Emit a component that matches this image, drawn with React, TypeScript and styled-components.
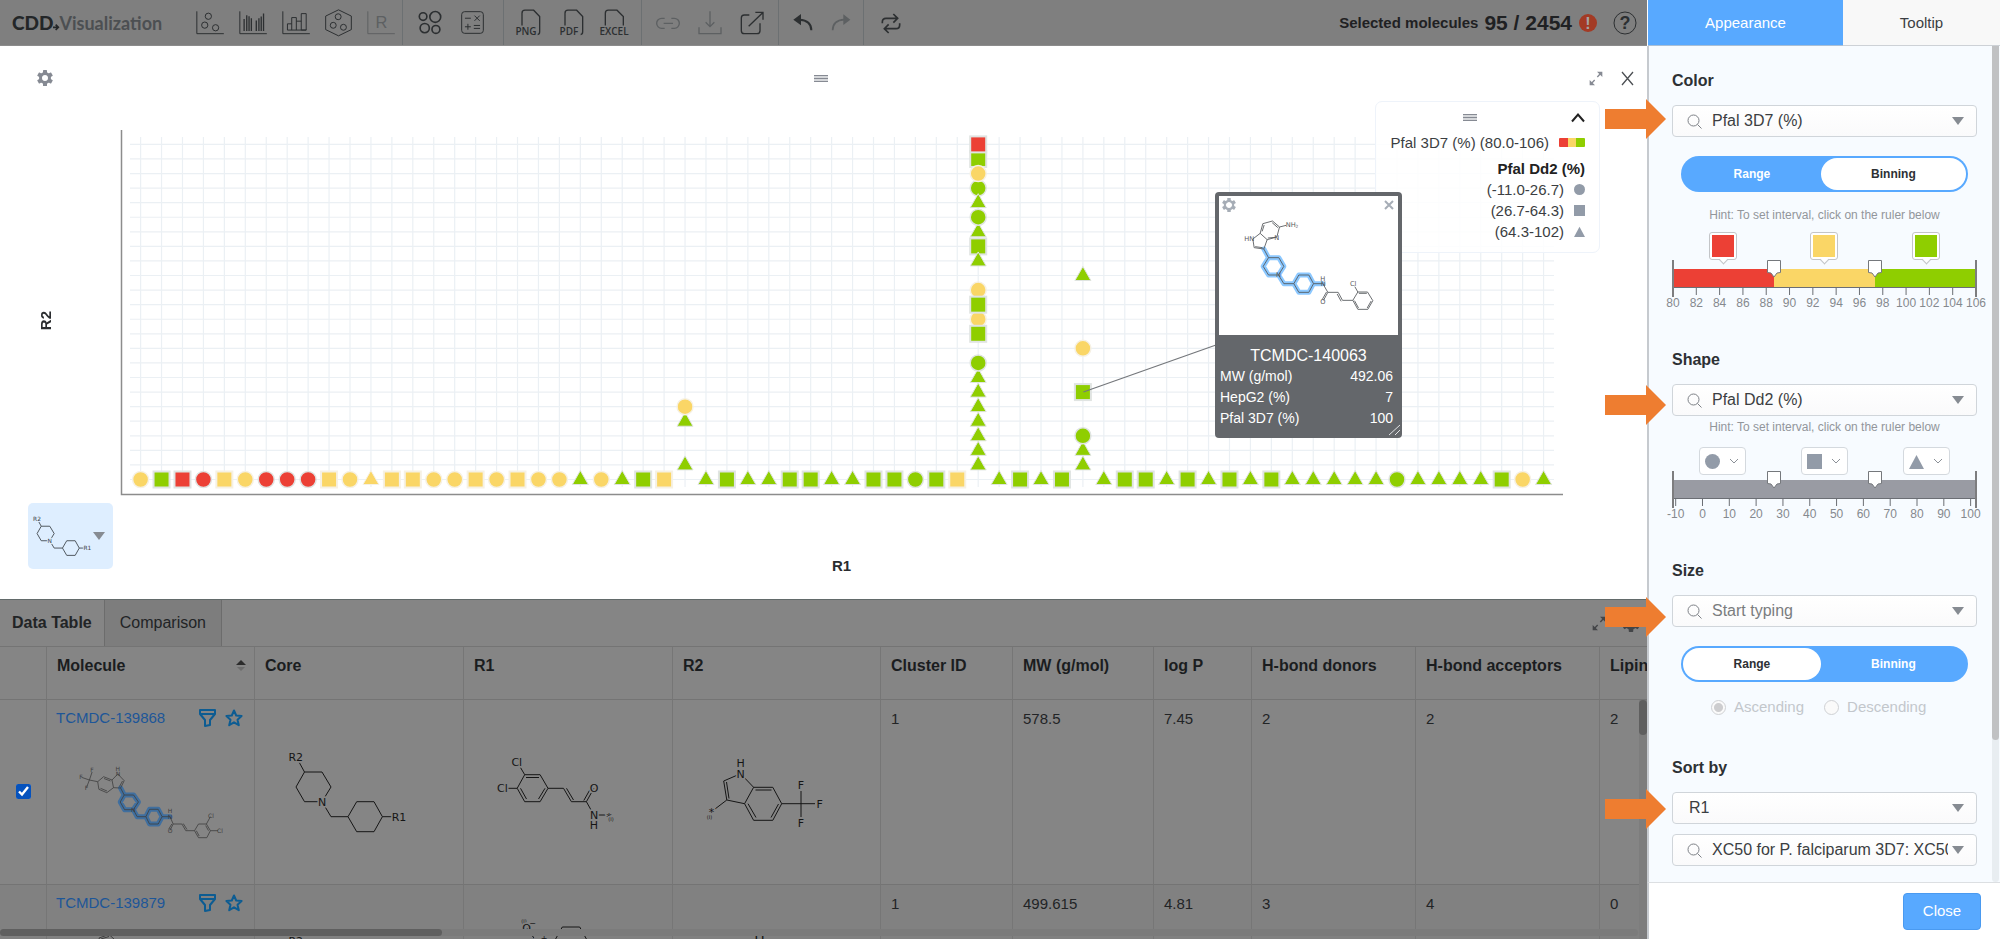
import React from "react";
import styled, { createGlobalStyle, css } from "styled-components";

const GlobalStyle = createGlobalStyle`
  * { box-sizing: border-box; }
  body {
    margin: 0;
    background: #fff;
    color: #3b3e42;
    font: 15px/20px "Liberation Sans", Arial, sans-serif;
  }
  button, input, select { font: inherit; color: inherit; }
`;

const RED = "#ec4035";
const YELLOW = "#fad666";
const GREEN = "#8fce00";
const BLUE = "#58a9ff";
const SLATE = "#929ba8";

/* ---------- page frame ---------- */

const Page = styled.div`
  display: flex;
  height: 100vh;
  overflow: hidden;
`;

const Main = styled.main`
  display: flex;
  flex: 1;
  flex-direction: column;
  min-width: 0;
`;

const PlainButton = styled.button`
  display: inline-flex;
  align-items: center;
  justify-content: center;
  padding: 0;
  border: 0;
  background: none;
`;

/* ---------- toolbar ---------- */

const Toolbar = styled.header`
  display: flex;
  flex: none;
  align-items: center;
  height: 46px;
  padding-right: 10px;
  border-bottom: 1px solid #8c8c8c;
  background: #7f7f7f;
  color: #2c2f31;
`;

const Brand = styled.div`
  display: flex;
  align-items: center;
  width: 196px;
  padding-left: 12px;
  font-family: Lato, sans-serif;
  font-size: 18px;
  font-weight: 700;
  color: #4c4f52;
  white-space: nowrap;
  & > svg { align-self: flex-end; color: #232628; }
`;

const BrandMark = styled.span`
  font-size: 19px;
  font-weight: 900;
  color: #232628;
`;

const ToolGroup = styled.div<{ $gap: number; $before: number; $after: number }>`
  display: flex;
  align-items: center;
  align-self: stretch;
  gap: ${(p) => p.$gap}px;
  padding: 0 ${(p) => p.$after}px 0 ${(p) => p.$before}px;
  & + & { border-left: 1px solid #6c7072; }
`;

const Tool = styled(PlainButton)`
  color: #2c2f31;
  &:disabled { color: #5d6062; }
`;

const Selection = styled.div`
  display: flex;
  align-items: center;
  gap: 6px;
  margin-left: auto;
  font-weight: 700;
  color: #1f2123;
  white-space: nowrap;
`;

const SelectionCount = styled.span`
  font-size: 21px;
`;

const Alert = styled.span`
  display: grid;
  place-items: center;
  width: 18px;
  height: 18px;
  margin: 0 10px 0 1px;
  border-radius: 50%;
  background: #a33b25;
  color: #a5a5a5;
  font-size: 16px;
`;

type DrawProps = { box: string; w: number; h: number; sw?: number; children: React.ReactNode };
const Draw = ({ box, w, h, sw = 3, children }: DrawProps) => (
  <svg viewBox={box} width={w} height={h} fill="none" stroke="currentColor" strokeWidth={sw} overflow="visible" aria-hidden>
    {children}
  </svg>
);

const FileIcon = ({ label, tail = true }: { label: string; tail?: boolean }) => (
  <Draw box="0 0 90 80" w={30} h={27} sw={4}>
    <path d={tail ? "M27 49V12Q27 3 36 3H62L80 22V68Q80 76 74 76" : "M19 49V12Q19 3 28 3H54L73 22V49"} />
    <text
      x={tail ? 39 : 45}
      y="77"
      textAnchor="middle"
      fontFamily="Open Sans, sans-serif"
      fontWeight="600"
      fontSize="30"
      fill="currentColor"
      stroke="none"
    >
      {label}
    </text>
  </Draw>
);

const Gear = ({ size = 16, hole = 3 }: { size?: number; hole?: number }) => (
  <svg viewBox="-8 -8 16 16" width={size} height={size} aria-hidden>
    {[0, 60, 120].map((a) => (
      <rect key={a} x="-2" y="-8" width="4" height="16" rx="0.6" fill="currentColor" transform={`rotate(${a})`} mask="url(#gearHole)" />
    ))}
    <circle r={(6 + hole) / 2} fill="none" stroke="currentColor" strokeWidth={6 - hole} />
  </svg>
);

const GearHole = styled.svg`
  position: absolute;
  width: 0;
  height: 0;
`;

const ExpandIcon = () => (
  <Draw box="0 0 42 45" w={14} h={15} sw={4}>
    <path d="M25 18L36 6M17 27L6 39" />
    <path d="M24 2H40V18Z M2 27V43H18Z" fill="currentColor" stroke="none" />
  </Draw>
);

const GripIcon = () => (
  <Draw box="0 0 14 7" w={14} h={7} sw={1}>
    <path d="M0 1H14V6H0Z" fill="#d5d7da" stroke="none" />
    <path d="M0 0.5H14M0 3.5H14M0 6.5H14" />
  </Draw>
);

const Caret = () => (
  <svg viewBox="0 0 12 8" width="12" height="8" aria-hidden>
    <path d="M0 0H12L6 8Z" fill="#868b92" />
  </svg>
);

/* ---------- molecules ---------- */

type Label = [number, number, string, number?];
type MoleculeProps = {
  box: string;
  w: number;
  h: number;
  bonds: string;
  highlight?: string;
  labels: Label[];
  size: number;
  sw?: number;
  halo?: string;
  ink?: string;
  glow?: string;
  glowWidth?: number;
};

const Molecule = ({
  box, w, h, bonds, highlight, labels, size, sw = 1, halo = "none", ink = "#151515", glow = "#8cc8ff", glowWidth = 4,
}: MoleculeProps) => (
  <svg viewBox={box} width={w} height={h} fill="none" stroke={ink} strokeWidth={sw} strokeLinejoin="round" aria-hidden>
    {highlight && <path d={highlight} stroke={glow} strokeWidth={glowWidth} strokeLinecap="round" />}
    <path d={bonds} />
    {highlight && <path d={highlight} />}
    {labels.map(([x, y, t, s = size], i) => (
      <text
        key={i}
        x={x}
        y={y + s * 0.37}
        fontSize={s}
        textAnchor="middle"
        fontFamily="DejaVu Sans, sans-serif"
        fill={ink}
        stroke={halo}
        strokeWidth={size * 0.3}
        paintOrder="stroke"
      >
        {t}
      </text>
    ))}
  </svg>
);

const CORE_BONDS =
  "M299 761L304.5 771H322L331 786L322 800.7H304.5L296 786L304.5 771M322 800.7L331 815.7H348L356.7 800.7H374L382.4 815.7L374 830.7H356.7L348 815.7M382.4 815.7H392";
const CORE_LABELS: Label[] = [[295.8, 756, "R2"], [322, 801, "N"], [399, 816, "R1"]];

const TOOLTIP_BONDS =
  "M240 162L248 133L277 125L298 143L290 173L261 181ZM246 156L252 137M276 130L293 145M286 174L263 176M240 162L218 179L222 205L251 209L261 181M225 202L247 205M298 143L318 138" +
  "M428 313L443 339L430 363M439 338L426 361M443 339H474L487 363H518M471 344L483 366M518 363L533 338H562L578 364L563 390H533ZM536 342H560M573 365L561 386M523 364L535 386M533 338L524 322";
const TOOLTIP_CORE =
  "M251 209L265 235H296L311 261L295 287H265L249 261L265 235M295 287L311 313H341L356 287H386L400 313L386 339H356L341 313M400 313H428";

const ROW_BONDS =
  "M92.1 772L89.4 780L81.5 777.3M89.4 780L86.6 787.3M89.4 780L97.7 781.7L103.6 776.7L112 780L113.5 787.7L106.8 792.7L98.9 789.3L97.7 781.7M104 778.5L110.5 781M107 791L100.5 788.3M112 780L117.8 774L124.2 780.7L120.6 788L113.5 787.7M122.5 781L119.5 786.5" +
  "M170 816.7L173.2 824L170 830.3M171.8 824L168.8 829M173.2 824H181.9L185.8 830.7H194.5L198.5 824H206.4L210.4 830.7L206.8 837.7H198.5L194.5 830.7M183.2 823.5L187 829.5M196.3 830.7L199.2 836M208.5 830.7L205.7 825.5M206.4 824L210.4 816.7M210.4 830.7H218";
const ROW_CORE =
  "M120.6 788L124.2 795H133.6L138.4 802L133.3 809.7H124.6L120.2 802L124.2 795M133.3 809.7L137.2 816.7H145.9L149.5 809.3H158.2L162.1 816.7L158.2 824H149.5L145.9 816.7M162.1 816.7H170";

/* ---------- plot ---------- */

const PlotPanel = styled.section`
  position: relative;
  flex: none;
  background: #fff;
`;

const PlotBar = styled.div`
  display: grid;
  grid-template-columns: 1fr auto 1fr;
  align-items: center;
  height: 64px;
  padding: 0 13px 0 7px;
  color: #868a93;
`;

const PlotSettings = styled(PlainButton)`
  justify-self: start;
  margin-left: 30px;
  color: inherit;
`;

const BarActions = styled.div`
  display: flex;
  align-items: center;
  justify-content: flex-end;
  gap: 18px;
  & > button { color: inherit; }
`;

const PlotBody = styled.div`
  display: grid;
  grid-template-columns: 120px 1fr;
`;

const YAxisName = styled.div`
  display: flex;
  align-items: center;
  padding: 28px 0 0 36px;
  font-weight: 700;
  color: #2a2c2f;
  & > span { writing-mode: vertical-rl; transform: rotate(180deg); }
`;

const PlotSvg = styled.svg`
  display: block;
  width: 100%;
`;

const PlotFoot = styled.div`
  display: grid;
  grid-template-columns: 120px 1fr;
  height: 96px;
  padding-bottom: 24px;
`;

const CorePicker = styled.button`
  display: flex;
  align-items: center;
  justify-content: space-between;
  width: 85px;
  height: 66px;
  margin-left: 28px;
  padding: 0 8px 0 3px;
  border: 0;
  border-radius: 5px;
  background: #deeeff;
`;

const XAxisName = styled.div`
  padding: 53px 84px 0 0;
  text-align: center;
  font-weight: 700;
  color: #2a2c2f;
`;

const COLS = Array.from({ length: 68 }, (_, i) => 140.6 + i * 20.94);
const ROWS = Array.from({ length: 24 }, (_, i) => 479.5 - i * 14.57);

const BOTTOM = (
  "cY sG sR cR sY cY cR cR cR sY cY tY sY sY cY cY sY cY sY cY cY tG cY tG sG sY -- tG sG tG tG sG sG tG " +
  "tG sG sG cG sG sY -- tG sG tG sG -- tG sG sG tG sG tG sG tG sG tG tG tG tG tG cG tG tG tG tG sG cY tG"
).split(" ");

const STACKED: [number, number, string][] = [
  [26, 1, "tG"], [26, 4, "tG"], [26, 5, "cY"],
  [40, 7, "tG"], [40, 6, "tG"], [40, 5, "tG"], [40, 4, "tG"], [40, 3, "tG"], [40, 2, "tG"], [40, 1, "tG"], [40, 8, "cG"],
  [40, 11, "cY"], [40, 13, "cY"], [40, 10, "sG"], [40, 12, "sG"],
  [40, 17, "tG"], [40, 16, "sG"], [40, 15, "tG"], [40, 18, "cG"], [40, 20, "cG"], [40, 19, "tG"],
  [40, 22, "sG"], [40, 21, "cY"], [40, 23, "sR"],
  [45, 1, "tG"], [45, 2, "tG"], [45, 3, "cG"], [45, 6, "sG"], [45, 9, "cY"], [45, 14, "tG"],
];

const FILLS: Record<string, string> = { R: RED, Y: YELLOW, G: GREEN };

const Mark = ({ x, y, kind }: { x: number; y: number; kind: string }) => {
  const fill = FILLS[kind[1]];
  const edge = kind[1] === "Y" ? "#f6f1e4" : "#e0e4e2";
  if (kind[0] === "c") return <circle cx={x} cy={y} r="8" fill={fill} stroke={edge} strokeWidth="1.5" />;
  if (kind[0] === "s") return <rect x={x - 8} y={y - 8} width="16" height="16" fill={fill} stroke={edge} strokeWidth="2" />;
  if (kind[0] === "t") return <path d={`M${x} ${y - 9}L${x + 8} ${y + 5}H${x - 8}Z`} fill={fill} stroke={edge} strokeWidth="1" />;
  return null;
};

const Plot = () => (
  <PlotSvg viewBox="120 110 1527 393" role="img" aria-label="R1 by R2 scatter plot">
    <path
      d={COLS.map((x) => `M${x} 137V487`).join("") + ROWS.map((y) => `M130 ${y}H1554`).join("")}
      stroke="#ebf0f4"
      strokeWidth="1.2"
    />
    <path d="M121.5 130V494.5H1563" fill="none" stroke="#8c8c8c" strokeWidth="1.5" />
    {BOTTOM.map((kind, i) => <Mark key={i} x={COLS[i]} y={ROWS[0]} kind={kind} />)}
    {STACKED.map(([c, r, kind]) => <Mark key={`${c}-${r}`} x={COLS[c]} y={ROWS[r]} kind={kind} />)}
    <path d="M1083.4 392L1216 345" stroke="#74777b" strokeWidth="1.2" />
  </PlotSvg>
);

const Legend = styled.div`
  position: absolute;
  top: 55px;
  right: 47px;
  display: flex;
  flex-direction: column;
  width: 225px;
  height: 152px;
  padding: 7px 14px 0;
  border: 1px solid #eef3fa;
  border-radius: 7px;
  background: rgba(255, 255, 255, 0.85);
  line-height: 21px;
`;

const LegendTop = styled.div`
  display: grid;
  grid-template-columns: 1fr 14px 108px;
  align-items: center;
  height: 16px;
  margin-bottom: 7px;
  color: #868a93;
  & > svg { grid-column: 2; }
  & > button { justify-self: end; color: #222; }
`;

const LegendRow = styled.div`
  display: flex;
  align-items: center;
  justify-content: flex-end;
  gap: 10px;
  white-space: nowrap;
`;

const LegendTitle = styled.div`
  margin-top: 5px;
  text-align: right;
  font-weight: 700;
  color: #222;
`;

const Ramp = styled.span`
  width: 26px;
  height: 9px;
  border-radius: 1px;
  background: linear-gradient(90deg, ${RED} 33%, ${YELLOW} 33% 66%, ${GREEN} 66%);
`;

const ShapeIcon = ({ kind, size }: { kind: string; size: number }) => (
  <svg viewBox="0 0 16 16" width={size} height={size} fill={SLATE} aria-hidden>
    {kind === "circle" && <circle cx="8" cy="8" r="8" />}
    {kind === "square" && <path d="M0 0H16V16H0Z" />}
    {kind === "triangle" && <path d="M8 1L16 16H0Z" />}
  </svg>
);

const Card = styled.article`
  position: absolute;
  top: 146px;
  left: 1215px;
  width: 187px;
  height: 246px;
  padding: 4px;
  border-radius: 4px;
  background: #64676b;
  color: #fff;
  font-size: 14px;
  line-height: 21px;
`;

const CardPicture = styled.div`
  position: relative;
  height: 139px;
  background: #fff;
  & > svg { display: block; }
`;

const CardTools = styled.div`
  position: absolute;
  inset: 2px 4px auto 3px;
  display: flex;
  justify-content: space-between;
  & > button { color: #a6adb6; }
`;

const CardTitle = styled.h3`
  margin: 10px 0 0;
  font-size: 16px;
  font-weight: 400;
  text-align: center;
`;

const CardList = styled.dl`
  display: grid;
  grid-template-columns: 1fr auto;
  margin: 0;
  padding: 0 5px 0 1px;
  & > dd { margin: 0; text-align: right; }
`;

const CardResize = styled.span`
  position: absolute;
  right: 1px;
  bottom: 2px;
  line-height: 0;
`;

/* ---------- data table ---------- */

const Data = styled.section`
  position: relative;
  display: flex;
  flex: 1;
  flex-direction: column;
  min-height: 0;
  overflow: hidden;
  border-top: 1px solid #626a6a;
  background: #858585;
  color: #222426;
`;

const DataBar = styled.div`
  display: flex;
  flex: none;
  align-items: stretch;
  height: 47px;
  border-bottom: 1px solid #747474;
  font-size: 16px;
`;

const DataTab = styled.button<{ $active?: boolean }>`
  padding: 0 ${(p) => (p.$active ? 12 : 15)}px;
  border: 0;
  border-right: 1px solid #6c6c6c;
  background: ${(p) => (p.$active ? "none" : "#7d7d7d")};
  font-weight: ${(p) => (p.$active ? 700 : 400)};
`;

const DataActions = styled.div`
  display: flex;
  align-items: center;
  gap: 16px;
  margin-left: auto;
  padding-right: 7px;
  color: #434548;
  & > button { color: inherit; }
`;

const Table = styled.table`
  table-layout: fixed;
  width: 1800px;
  border-collapse: separate;
  border-spacing: 0;
`;

const Th = styled.th`
  height: 53px;
  padding: 9px 8px 0 10px;
  border-right: 1px solid #767676;
  border-bottom: 1px solid #747474;
  font-size: 16px;
  text-align: left;
  vertical-align: top;
  color: #1b1d1f;
  white-space: nowrap;
`;

const ThSort = styled.span`
  display: flex;
  align-items: center;
  justify-content: space-between;
`;

const Tr = styled.tr<{ $alt?: boolean }>`
  background: ${(p) => (p.$alt ? "#818181" : "#858585")};
`;

const Td = styled.td<{ $kind?: "tick" | "drawing" }>`
  height: 185px;
  padding: 9px 10px 0;
  border-right: 1px solid #767676;
  border-bottom: 1px solid #747474;
  vertical-align: top;
  ${(p) => p.$kind === "tick" && css`padding: 4px 0 0; vertical-align: middle; text-align: center;`}
  ${(p) => p.$kind === "drawing" && css`padding: 0;`}
  & > svg { display: block; }
`;

const Tick = styled.input`
  width: 15px;
  height: 15px;
  margin: 0;
  accent-color: #0552bd;
`;

const NameLine = styled.div`
  display: flex;
  align-items: center;
  gap: 9px;
  height: 36px;
  padding: 0 11px 0 9px;
  & > a { margin-right: auto; color: #1d5698; text-decoration: none; }
  & > button { color: #0d5c92; }
`;

const HScroll = styled.div`
  position: absolute;
  right: 9px;
  bottom: 3px;
  left: 0;
  height: 7px;
  border-radius: 4px;
  background: #7b7b7b;
`;

const HThumb = styled.div`
  width: 27%;
  height: 7px;
  border-radius: 4px;
  background: #5f5f5f;
`;

const VScroll = styled.div`
  position: absolute;
  top: 100px;
  right: 0;
  bottom: 0;
  width: 8px;
  background: #7d7d7d;
`;

const VThumb = styled.div`
  height: 35px;
  border-radius: 4px;
  background: #5f5f5f;
`;

const Funnel = () => (
  <Draw box="0 0 17 18" w={17} h={18} sw={2}>
    <path d="M1 1H16V5L11 11V16L6 17V11L1 5ZM1 5H16" strokeLinejoin="round" />
  </Draw>
);
const Star = () => (
  <Draw box="0 0 18 18" w={18} h={18} sw={2}>
    <path d="M9 1.5L11.2 6.5L16.6 7L12.5 10.7L13.8 16.2L9 13.3L4.2 16.2L5.5 10.7L1.4 7L6.8 6.5Z" strokeLinejoin="round" />
  </Draw>
);

const NameCell = ({ name, children }: { name: string; children: React.ReactNode }) => (
  <Td $kind="drawing">
    <NameLine>
      <a href="#molecule">{name}</a>
      <PlainButton aria-label="Filter"><Funnel /></PlainButton>
      <PlainButton aria-label="Favorite"><Star /></PlainButton>
    </NameLine>
    {children}
  </Td>
);

const COLUMN_WIDTHS = [47, 208, 209, 209, 208, 132, 141, 98, 164, 184, 200];
const NUMERIC_HEADS = ["Cluster ID", "MW (g/mol)", "log P", "H-bond donors", "H-bond acceptors", "Lipinski"];

const cell = { size: 11, halo: "#858585" };

const DataTable = () => (
  <Table>
    <colgroup>
      {COLUMN_WIDTHS.map((w, i) => <col key={i} width={w} />)}
    </colgroup>
    <thead>
      <tr>
        <Th aria-label="Selected" />
        <Th>
          <ThSort>
            Molecule
            <svg viewBox="0 0 10 12" width="10" height="12" aria-hidden>
              <path d="M0 5L5 0L10 5Z" fill="#2c2c2c" />
              <path d="M1 7H9L5 11Z" fill="#6d6d6d" />
            </svg>
          </ThSort>
        </Th>
        <Th>Core</Th>
        <Th>R1</Th>
        <Th>R2</Th>
        {NUMERIC_HEADS.map((h) => <Th key={h}>{h}</Th>)}
      </tr>
    </thead>
    <tbody>
      <Tr>
        <Td $kind="tick"><Tick type="checkbox" defaultChecked aria-label="Select TCMDC-139868" /></Td>
        <NameCell name="TCMDC-139868">
          <Molecule
            box="47 736 207 130" w={207} h={130} size={6} bonds={ROW_BONDS} highlight={ROW_CORE}
            ink="#3d3d3d" glow="#406f9f" sw={0.8} glowWidth={5}
            labels={[[92.1, 770, "F"], [81, 777, "F"], [86.6, 788, "F"], [117.8, 769, "H"], [118, 774, "N"], [133.3, 809.7, "N"],
              [170, 811, "H"], [170, 817, "N"], [170, 831, "O"], [211, 816, "Cl"], [220, 831, "Cl"]]}
          />
        </NameCell>
        <Td $kind="drawing"><Molecule box="255 699 208 184" w={208} h={184} bonds={CORE_BONDS} labels={CORE_LABELS} {...cell} /></Td>
        <Td $kind="drawing">
          <Molecule
            box="464 699 208 184" w={208} h={184} {...cell}
            bonds="M519 764L524.7 773.7H540.1L548 787.3L540.1 800.7H524.7L517.2 787.3L524.7 773.7M526 776.5H539M545 787.3L538.5 798M526.5 798L520.5 787.3M517.2 787.3H508M548 787.3H563.5L571.4 800.7H586.4L593.9 787.3M566.5 787.3L573.5 799M583.8 799.5L590 788.5M586.4 800.7L593.9 814H607"
            labels={[[516.8, 760.7, "Cl"], [502.4, 787.3, "Cl"], [594, 787, "O"], [594, 814, "N"], [594, 824, "H"], [609, 816, "*"], [611, 818, "(I)", 5]]}
          />
        </Td>
        <Td $kind="drawing">
          <Molecule
            box="673 699 207 184" w={207} h={184} {...cell}
            bonds="M740.6 772.7L723.7 780L726.8 799L744.6 802.7L753.6 786.3L740.6 772.7M726.5 781L729 797.5M753.6 786.3H772.8L781.7 802.7L772.8 819.3H753.6L744.6 802.7M755.5 789H771.5M778.5 803L771 816.5M756 816.5L748 802.7M781.7 802.7H815M801 790V816M726.8 799L715 808"
            labels={[[740.6, 762, "H"], [740.6, 772.7, "N"], [801, 784, "F"], [819.6, 802.7, "F"], [801, 822, "F"], [711.6, 811, "*"], [709.4, 816, "(I)", 5]]}
          />
        </Td>
        {["1", "578.5", "7.45", "2", "2", "2"].map((v, i) => <Td key={i}>{v}</Td>)}
      </Tr>
      <Tr $alt>
        <Td $kind="tick" />
        <NameCell name="TCMDC-139879">
          <Molecule box="47 921 207 140" w={207} h={140} size={6} ink="#3d3d3d" bonds="M99 938L109 934.5L114 939L112 948H102ZM101 939L109 936.5" labels={[]} />
        </NameCell>
        <Td $kind="drawing"><Molecule box="255 884 208 184" w={208} h={184} size={11} bonds="" labels={[[295.8, 940, "R2"]]} /></Td>
        <Td $kind="drawing">
          <Molecule
            box="464 884 208 184" w={208} h={184} size={11} halo="#818181"
            bonds="M527 927L538 943M555.6 938L562.3 926H579.7L586.4 938M564 929H578"
            labels={[[524, 920, "(I)", 5], [526.5, 927, "O"], [532.5, 922, "−", 8], [538, 942, "N"], [544, 937, "+", 8]]}
          />
        </Td>
        <Td $kind="drawing"><Molecule box="673 884 207 184" w={207} h={184} size={14} bonds="" labels={[[759.4, 934, "H"]]} /></Td>
        {["1", "499.615", "4.81", "3", "4", "0"].map((v, i) => <Td key={i}>{v}</Td>)}
      </Tr>
    </tbody>
  </Table>
);

/* ---------- settings panel ---------- */

const Panel = styled.aside`
  position: relative;
  display: flex;
  flex: none;
  flex-direction: column;
  width: 353px;
`;

const PanelTabs = styled.div`
  display: flex;
  flex: none;
  height: 46px;
  padding-left: 1px;
`;

const PanelTab = styled.button<{ $active?: boolean }>`
  flex: ${(p) => (p.$active ? 195 : 157)};
  padding: 0;
  border: 0;
  border-bottom: 1px solid ${(p) => (p.$active ? "#a9bfd6" : "#cdd1d6")};
  background: ${(p) => (p.$active ? BLUE : "#f8f8f8")};
  color: ${(p) => (p.$active ? "#fff" : "#3b3e42")};
`;

const PanelBody = styled.div`
  display: flex;
  flex: 1;
  min-height: 0;
  overflow: hidden;
  border-left: 2px solid #c6cacf;
  background: #f7fbff;
`;

const PanelContent = styled.form`
  flex: 1;
  min-width: 0;
  padding: 25px 15px 16px 23px;
`;

const PanelScroll = styled.div`
  width: 7px;
  margin-right: 1px;
  border-radius: 4px;
  background: #e8edf1;
`;

const PanelThumb = styled.div`
  height: 83%;
  border-radius: 0 0 4px 4px;
  background: #c0c1c3;
`;

const Group = styled.fieldset`
  min-width: 0;
  margin: 0 0 41px;
  padding: 0;
  border: 0;
`;

const GroupTitle = styled.legend`
  margin-bottom: 14px;
  padding: 0;
  font-size: 16px;
  font-weight: 700;
  color: #2d3034;
`;

const Field = styled.label<{ $plain?: boolean }>`
  display: flex;
  align-items: center;
  height: 32px;
  padding: 0 12px 0 ${(p) => (p.$plain ? 16 : 14)}px;
  border: 1px solid #d0d5da;
  border-radius: 4px;
  background: linear-gradient(#fff, #fafafb);
  font-size: 16px;
  & + & { margin-top: 10px; }
  & > svg { flex: none; }
  & > select, & > input {
    flex: 1;
    min-width: 0;
    margin: 0 4px 0 0;
    padding: 0;
    padding-left: ${(p) => (p.$plain ? 0 : 10)}px;
    border: 0;
    outline: 0;
    appearance: none;
    background: none;
  }
  & > input::placeholder { color: #7a7c7f; }
`;

const SearchIcon = () => (
  <Draw box="0 0 15 15" w={15} h={15} sw={1}>
    <g stroke="#7d8187"><circle cx="6.5" cy="6.5" r="5.5" /><path d="M10.5 10.5L14.5 14.5" /></g>
  </Draw>
);

const SelectField = ({ label, value, plain }: { label: string; value: string; plain?: boolean }) => (
  <Field $plain={plain}>
    {!plain && <SearchIcon />}
    <select aria-label={label} defaultValue={value}><option>{value}</option></select>
    <Caret />
  </Field>
);

const Switch = styled.div`
  display: flex;
  height: 36px;
  margin: 19px 9px 15px;
  padding: 2px;
  border-radius: 18px;
  background: ${BLUE};
`;

const SwitchOption = styled.button<{ $on?: boolean }>`
  flex: 20;
  padding: 0;
  border: 0;
  border-radius: 16px;
  background: ${(p) => (p.$on ? "#fff" : "none")};
  color: ${(p) => (p.$on ? "#2d3034" : "#fff")};
  font-size: 12px;
  font-weight: 700;
  &:first-child { flex: 19; }
`;

const RangeSwitch = ({ binning }: { binning?: boolean }) => (
  <Switch>
    <SwitchOption type="button" $on={!binning} aria-pressed={!binning}>Range</SwitchOption>
    <SwitchOption type="button" $on={binning} aria-pressed={!!binning}>Binning</SwitchOption>
  </Switch>
);

const Hint = styled.p`
  margin: 3px 0 0;
  font-size: 12px;
  line-height: 16px;
  text-align: center;
  color: #92969b;
  white-space: nowrap;
`;

const BinRow = styled.div<{ $before: number; $after: number }>`
  display: grid;
  grid-template-columns: repeat(3, 1fr);
  justify-items: center;
  margin: ${(p) => p.$before}px 0 ${(p) => p.$after}px;
`;

const Swatch = styled.button<{ $color: string }>`
  position: relative;
  width: 28px;
  height: 28px;
  padding: 2px;
  border: 1px solid #c3c5c8;
  border-radius: 3px;
  background: #fff;
  &::before {
    content: "";
    display: block;
    height: 22px;
    background: ${(p) => p.$color};
  }
  &::after {
    content: "";
    position: absolute;
    bottom: -4px;
    left: 10px;
    width: 6px;
    height: 6px;
    border: solid #c3c5c8;
    border-width: 0 1px 1px 0;
    background: linear-gradient(135deg, transparent 50%, #fff 50%);
    transform: rotate(45deg);
  }
`;

const ShapePick = styled.button`
  display: flex;
  align-items: center;
  gap: 10px;
  width: 47px;
  height: 28px;
  padding: 0 7px 0 5px;
  border: 1px solid #d4d9de;
  border-radius: 4px;
  background: #fff;
`;

const RulerSvg = styled.svg`
  display: block;
  width: 100%;
  overflow: visible;
`;

type RulerProps = { min: number; max: number; from: number; step: number; colors: string[] };
const Ruler = ({ min, max, from, step, colors }: RulerProps) => {
  const at = (v: number) => 1 + ((v - min) / (max - min)) * 303;
  const ticks: number[] = [];
  for (let v = from; v <= max; v += step) ticks.push(v);
  return (
    <RulerSvg viewBox="0 0 305 40" aria-hidden>
      {colors.map((c, i) => <rect key={i} x={1 + i * 101} y="0" width="101" height="18" fill={c} />)}
      <path d="M0 18.5H305" stroke="#6b6e74" />
      <path d={ticks.map((v) => `M${at(v)} 18V26`).join("")} stroke="#6b6e74" />
      <path d="M1 -9V28M304 -9V28" stroke="#7d7d7f" strokeWidth="2" />
      {[102, 203].map((x) => (
        <path key={x} d={`M${x - 6.5} -8.5H${x + 6.5}V3.5L${x + 3} 4L${x} 8L${x - 3} 4L${x - 6.5} 3.5Z`} fill="#fff" stroke="#75787c" strokeLinejoin="round" />
      ))}
      {ticks.map((v) => (
        <text key={v} x={at(v)} y="38" textAnchor="middle" fontSize="12" fill="#85898e">{v}</text>
      ))}
    </RulerSvg>
  );
};

const Radios = styled.div`
  display: flex;
  align-items: center;
  gap: 20px;
  padding-left: 39px;
  color: #c3c7cc;
  & > label { display: flex; align-items: center; gap: 8px; }
`;

const Radio = styled.input`
  appearance: none;
  width: 15px;
  height: 15px;
  margin: 0;
  border: 1px solid #cfd1d4;
  border-radius: 50%;
  background: #fafafa;
  &:checked { background: radial-gradient(#cdcdcf 4px, #fafafa 5px); }
`;

const PanelFoot = styled.footer`
  display: flex;
  flex: none;
  align-items: center;
  justify-content: flex-end;
  height: 57px;
  padding-right: 19px;
  border-top: 1px solid #dcdfe2;
  border-left: 2px solid #c6cacf;
  background: #fff;
`;

const CloseButton = styled.button`
  width: 78px;
  height: 37px;
  border: 1px solid #4a9af0;
  border-radius: 4px;
  background: ${BLUE};
  color: #fff;
`;

const Callout = styled.svg<{ $top: number }>`
  position: absolute;
  top: ${(p) => p.$top}px;
  left: -42px;
  width: 61px;
  height: 40px;
  fill: #ee7d30;
`;

const CALLOUT_TOPS = [99, 385, 597, 789];

export default function App() {
  return (
    <Page>
      <GlobalStyle />
      <GearHole aria-hidden>
        <mask id="gearHole" maskUnits="userSpaceOnUse" x="-9" y="-9" width="18" height="18">
          <rect x="-9" y="-9" width="18" height="18" fill="#fff" />
          <circle r="3.4" fill="#000" />
        </mask>
      </GearHole>
      <Main>
        <Toolbar>
          <Brand>
            <BrandMark>CDD</BrandMark>
            <Draw box="0 0 18 30" w={6} h={10} sw={5}><path d="M0 13H14M8 5L16 13L8 21" /></Draw>
            Visualization
          </Brand>
          <ToolGroup $gap={15} $before={0} $after={7}>
            <Tool aria-label="Scatter plot">
              <Draw box="590 28 84 76" w={28} h={25}>
                <path d="M592 32V100H674" /><circle cx="627" cy="47" r="9.5" /><circle cx="616" cy="74" r="9.5" /><circle cx="649" cy="82" r="9.5" />
              </Draw>
            </Tool>
            <Tool aria-label="Histogram">
              <Draw box="716 28 84 76" w={28} h={25} sw={4}>
                <path d="M718 32V100H800" strokeWidth="3" /><path d="M731 55V92M739 44V92M746 47V92M753 53V92M768 60V92M776 53V92M783 48V92M790 39V92" />
              </Draw>
            </Tool>
            <Tool aria-label="Bar chart">
              <Draw box="846 28 84 76" w={28} h={25}>
                <path d="M848 32V100H930M862 89V70H875M875 89V51H889V89M889 62H904M904 89V39H919V89Z" /><path d="M862 89H919" />
              </Draw>
            </Tool>
            <Tool aria-label="Radial plot">
              <Draw box="975 26 82 84" w={27} h={28}>
                <path d="M1016 28L1055 47V88L1016 107L977 88V47Z" /><circle cx="1015" cy="49" r="9" /><circle cx="1000" cy="75" r="9" /><circle cx="1031" cy="81" r="9" />
              </Draw>
            </Tool>
            <Tool aria-label="R-group plot" disabled>
              <Draw box="1100 28 84 76" w={28} h={25}>
                <path d="M1102 32V100H1184" />
                <text x="1143" y="83" textAnchor="middle" fontSize="50" fill="currentColor" stroke="none">R</text>
              </Draw>
            </Tool>
          </ToolGroup>
          <ToolGroup $gap={19} $before={15} $after={19}>
            <Tool aria-label="Clusters">
              <Draw box="1252 30 72 76" w={24} h={25} sw={5}>
                <circle cx="1267" cy="50" r="11.5" /><circle cx="1304" cy="51" r="16.5" /><circle cx="1272" cy="85" r="14" /><circle cx="1306" cy="89" r="12" />
              </Draw>
            </Tool>
            <Tool aria-label="Calculator">
              <Draw box="1382 32 70 70" w={23} h={23}>
                <rect x="1384" y="34" width="66" height="66" rx="9" /><path d="M1394 54H1412M1423 46L1439 62M1439 46L1423 62M1394 80H1412M1403 71V89M1421 76H1440M1421 85H1440" />
              </Draw>
            </Tool>
          </ToolGroup>
          <ToolGroup $gap={13} $before={9} $after={12}>
            <Tool aria-label="Export PNG"><FileIcon label="PNG" /></Tool>
            <Tool aria-label="Export PDF"><FileIcon label="PDF" /></Tool>
            <Tool aria-label="Export Excel"><FileIcon label="EXCEL" tail={false} /></Tool>
          </ToolGroup>
          <ToolGroup $gap={18} $before={14} $after={14}>
            <Tool aria-label="Copy link" disabled>
              <Draw box="527 30 72 72" w={24} h={24} sw={4}><path d="M553 52H544a15 15 0 0 0 0 30H553M573 52H582a15 15 0 0 1 0 30H573M550 67H578" /></Draw>
            </Tool>
            <Tool aria-label="Download" disabled>
              <Draw box="650 29 72 72" w={24} h={24} sw={4}><path d="M653 78V97H719V78M686 30V75M673 63L686 76L699 63" /></Draw>
            </Tool>
            <Tool aria-label="Open">
              <Draw box="780 32 72 72" w={24} h={24} sw={4}><path d="M808 44H793Q784 44 784 53V91Q784 100 793 100H831Q840 100 840 91V69M806 78L848 37M826 36H849V58" /></Draw>
            </Tool>
          </ToolGroup>
          <ToolGroup $gap={18} $before={14} $after={12}>
            <Tool aria-label="Undo">
              <Draw box="937 36 60 60" w={20} h={20} sw={6}><path d="M956 56Q992 58 992 88" /><path d="M938 56L961 39V73Z" fill="currentColor" stroke="none" /></Draw>
            </Tool>
            <Tool aria-label="Redo" disabled>
              <Draw box="1048 36 60 60" w={20} h={20} sw={5}><path d="M1088 56Q1053 58 1053 88" /><path d="M1106 56L1085 40V72Z" fill="currentColor" stroke="none" /></Draw>
            </Tool>
          </ToolGroup>
          <ToolGroup $gap={0} $before={17} $after={0}>
            <Tool aria-label="Reset">
              <Draw box="1202 37 60 60" w={20} h={20} sw={5}><path d="M1206 68V64Q1206 53 1217 53H1250M1239 40L1252 53L1239 66M1258 68V73Q1258 84 1247 84H1214M1225 71L1212 84L1225 97" /></Draw>
            </Tool>
          </ToolGroup>
          <Selection>
            Selected molecules <SelectionCount>95 / 2454</SelectionCount>
            <Alert>!</Alert>
            <Tool aria-label="Help">
              <Draw box="0 0 24 24" w={24} h={24} sw={1}>
                <circle cx="12" cy="12" r="11" />
                <text x="12" y="18" textAnchor="middle" fontSize="18" fill="currentColor" stroke="none">?</text>
              </Draw>
            </Tool>
          </Selection>
        </Toolbar>

        <PlotPanel>
          <PlotBar>
            <PlotSettings aria-label="Plot settings"><Gear /></PlotSettings>
            <GripIcon />
            <BarActions>
              <PlainButton aria-label="Expand plot"><ExpandIcon /></PlainButton>
              <PlainButton aria-label="Close plot">
                <Draw box="0 0 13 13" w={13} h={13} sw={1}><path d="M1 0L12 13M12 0L1 13" stroke="#4d5054" strokeWidth="1.3" /></Draw>
              </PlainButton>
            </BarActions>
          </PlotBar>
          <PlotBody>
            <YAxisName><span>R2</span></YAxisName>
            <Plot />
          </PlotBody>
          <PlotFoot>
            <CorePicker aria-label="Core">
              <Molecule box="284 748 124 86" w={61} h={42} bonds={CORE_BONDS} labels={CORE_LABELS} size={12} sw={1.8} ink="#3f454b" halo="#deeeff" />
              <Caret />
            </CorePicker>
            <XAxisName>R1</XAxisName>
          </PlotFoot>

          <Legend>
            <LegendTop>
              <GripIcon />
              <PlainButton aria-label="Collapse legend">
                <Draw box="0 0 14 9" w={14} h={9} sw={2}><path d="M1 8.5L7 1.5L13 8.5" /></Draw>
              </PlainButton>
            </LegendTop>
            <LegendRow>Pfal 3D7 (%) (80.0-106) <Ramp /></LegendRow>
            <LegendTitle>Pfal Dd2 (%)</LegendTitle>
            <LegendRow>(-11.0-26.7) <ShapeIcon kind="circle" size={11} /></LegendRow>
            <LegendRow>(26.7-64.3) <ShapeIcon kind="square" size={11} /></LegendRow>
            <LegendRow>(64.3-102) <ShapeIcon kind="triangle" size={11} /></LegendRow>
          </Legend>

          <Card>
            <CardPicture>
              <Molecule
                box="117 50 536 414" w={179} h={138} size={20} sw={2.6} glowWidth={15} ink="#55585c" bonds={TOOLTIP_BONDS} highlight={TOOLTIP_CORE}
                labels={[[207, 178, "HN"], [290, 174, "N"], [332, 136, "NH"], [350, 142, "2", 13], [295, 287, "N"], [428, 297, "H"], [429, 314, "N"], [428, 366, "O"], [519, 314, "Cl"]]}
              />
              <CardTools>
                <PlainButton aria-label="Tooltip settings"><Gear size={14} hole={4} /></PlainButton>
                <PlainButton aria-label="Close tooltip">
                  <Draw box="0 0 10 10" w={10} h={10} sw={2}><path d="M1 1L9 9M9 1L1 9" /></Draw>
                </PlainButton>
              </CardTools>
            </CardPicture>
            <CardTitle>TCMDC-140063</CardTitle>
            <CardList>
              <dt>MW (g/mol)</dt><dd>492.06</dd>
              <dt>HepG2 (%)</dt><dd>7</dd>
              <dt>Pfal 3D7 (%)</dt><dd>100</dd>
            </CardList>
            <CardResize><Draw box="0 0 12 12" w={12} h={12} sw={1}><path d="M0 11L11 1M6 11L11 6" stroke="#e2e3e4" /></Draw></CardResize>
          </Card>
        </PlotPanel>

        <Data>
          <DataBar>
            <DataTab $active>Data Table</DataTab>
            <DataTab>Comparison</DataTab>
            <DataActions>
              <PlainButton aria-label="Expand table"><ExpandIcon /></PlainButton>
              <PlainButton aria-label="Table settings"><Gear size={18} /></PlainButton>
            </DataActions>
          </DataBar>
          <DataTable />
          <VScroll><VThumb /></VScroll>
          <HScroll><HThumb /></HScroll>
        </Data>
      </Main>

      <Panel>
        <PanelTabs>
          <PanelTab $active>Appearance</PanelTab>
          <PanelTab>Tooltip</PanelTab>
        </PanelTabs>
        <PanelBody>
          <PanelContent>
            <Group>
              <GroupTitle>Color</GroupTitle>
              <SelectField label="Color" value="Pfal 3D7 (%)" />
              <RangeSwitch binning />
              <Hint>Hint: To set interval, click on the ruler below</Hint>
              <BinRow $before={9} $after={9}>
                {[RED, YELLOW, GREEN].map((c) => <Swatch key={c} type="button" $color={c} aria-label="Bin color" />)}
              </BinRow>
              <Ruler min={80} max={106} from={80} step={2} colors={[RED, YELLOW, GREEN]} />
            </Group>
            <Group>
              <GroupTitle>Shape</GroupTitle>
              <SelectField label="Shape" value="Pfal Dd2 (%)" />
              <Hint>Hint: To set interval, click on the ruler below</Hint>
              <BinRow $before={12} $after={5}>
                {["circle", "square", "triangle"].map((k) => (
                  <ShapePick key={k} type="button" aria-label={`Bin shape: ${k}`}>
                    <ShapeIcon kind={k} size={15} />
                    <Draw box="0 0 8 6" w={8} h={6} sw={1}><path d="M0 1L4 5L8 1" stroke="#8b9097" /></Draw>
                  </ShapePick>
                ))}
              </BinRow>
              <Ruler min={-11} max={102} from={-10} step={10} colors={["#999ba3", "#999ba3", "#999ba3"]} />
            </Group>
            <Group>
              <GroupTitle>Size</GroupTitle>
              <Field>
                <SearchIcon />
                <input type="text" aria-label="Size" placeholder="Start typing" />
                <Caret />
              </Field>
              <RangeSwitch />
              <Radios>
                <label><Radio type="radio" name="order" defaultChecked disabled />Ascending</label>
                <label><Radio type="radio" name="order" disabled />Descending</label>
              </Radios>
            </Group>
            <Group>
              <GroupTitle>Sort by</GroupTitle>
              <SelectField plain label="Sort axis" value="R1" />
              <SelectField label="Sort value" value="XC50 for P. falciparum 3D7: XC50" />
            </Group>
          </PanelContent>
          <PanelScroll><PanelThumb /></PanelScroll>
        </PanelBody>
        <PanelFoot><CloseButton>Close</CloseButton></PanelFoot>
        {CALLOUT_TOPS.map((top) => (
          <Callout key={top} $top={top} viewBox="0 0 61 40" aria-hidden><path d="M0 10H41V0L61 20L41 40V30H0Z" /></Callout>
        ))}
      </Panel>
    </Page>
  );
}
